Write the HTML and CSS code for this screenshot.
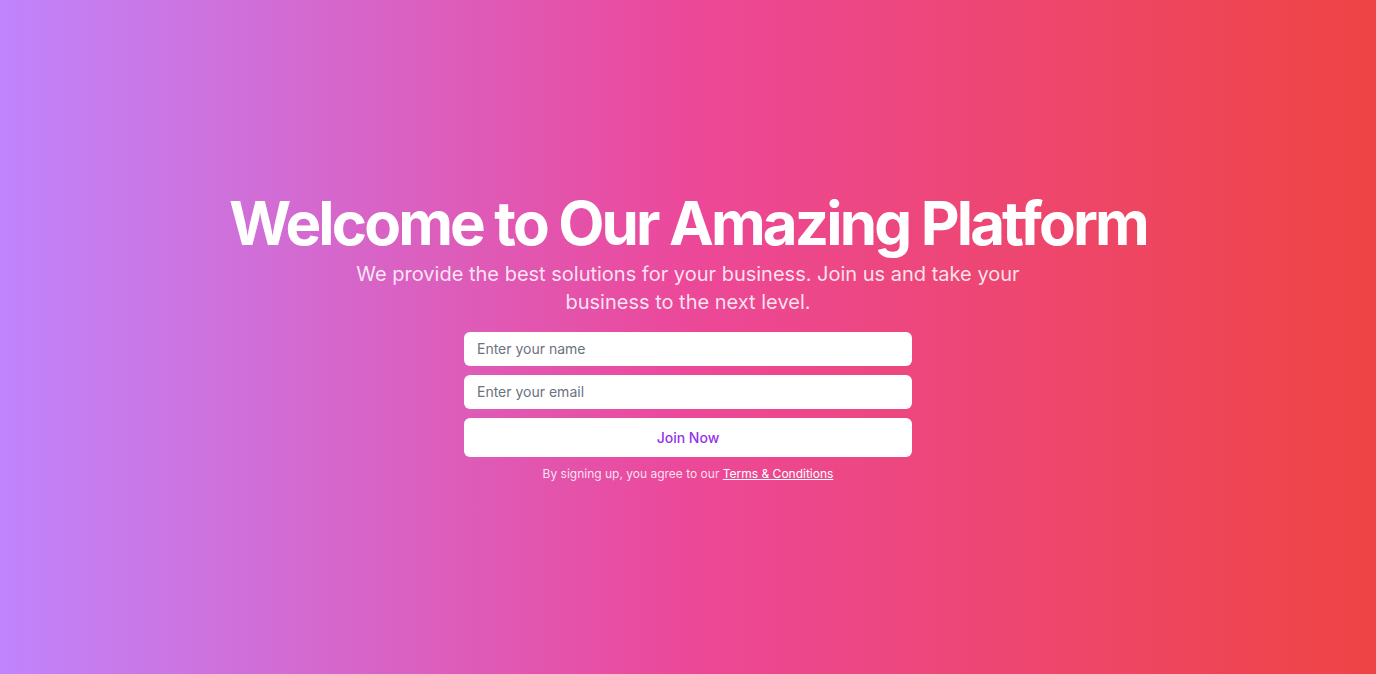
FILE: index.html
```html
<!DOCTYPE html>
<html lang="en">
<head>
<meta charset="utf-8">
<title>Welcome</title>
<link rel="stylesheet" href="styles.css">
</head>
<body>
<main class="hero">
  <div class="content">
    <h1 class="title">Welcome to Our Amazing Platform</h1>
    <p class="lead">We provide the best solutions for your business. Join us and take your business to the next level.</p>
    <form class="form">
      <input class="field" type="text" placeholder="Enter your name">
      <input class="field" type="email" placeholder="Enter your email">
      <button class="btn" type="button">Join Now</button>
    </form>
    <p class="note">By signing up, you agree to our <a class="link" href="#">Terms &amp; Conditions</a></p>
  </div>
</main>
</body>
</html>
```
FILE: styles.css
```css
* { box-sizing: border-box; }
html, body { margin: 0; padding: 0; }
body {
  font-family: Inter, "Noto Sans", sans-serif;
}
.hero {
  min-height: 674px;
  display: flex;
  align-items: center;
  justify-content: center;
  background: linear-gradient(to right, #c084fc, #ec4899, #ef4444);
  color: #fff;
}
.content {
  display: flex;
  flex-direction: column;
  align-items: center;
  text-align: center;
}
.title {
  margin: 0;
  font-size: 60px;
  line-height: 60px;
  font-weight: 700;
  letter-spacing: -2.85px;
}
.lead {
  margin: 7px 0 0;
  max-width: 672px;
  font-size: 20px;
  line-height: 28px;
  color: rgba(255,255,255,0.85);
}
.form {
  margin-top: 16px;
  width: 448px;
  display: flex;
  flex-direction: column;
  gap: 9px;
}
.field {
  height: 34px;
  border: 0;
  border-radius: 6px;
  padding: 0 13px;
  font-family: inherit;
  font-size: 14px;
  color: #111827;
  background: #fff;
  outline: none;
}
.field::placeholder { color: #6b7280; }
.btn {
  height: 39px;
  border: 0;
  border-radius: 6px;
  background: #fff;
  color: #9333ea;
  font-family: inherit;
  font-size: 14px;
  font-weight: 500;
  cursor: pointer;
}
.note {
  margin: 9px 0 0;
  font-size: 12px;
  line-height: 16px;
  color: rgba(255,255,255,0.85);
}
.link {
  color: #fff;
  text-decoration: underline;
}
```
